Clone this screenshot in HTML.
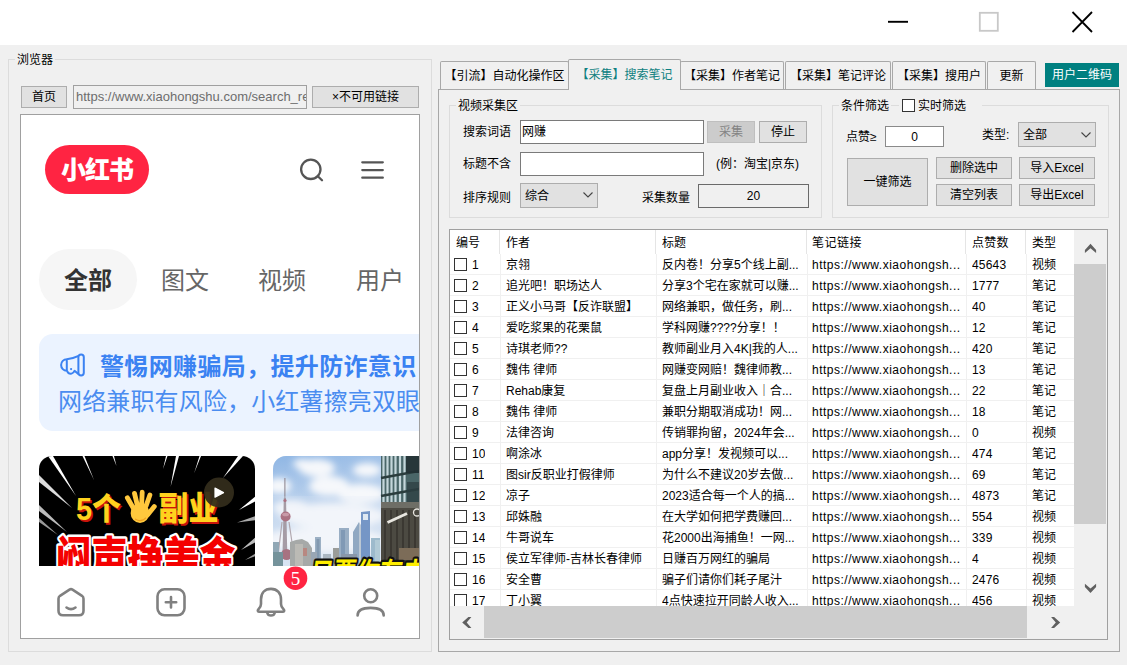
<!DOCTYPE html>
<html lang="zh-CN">
<head>
<meta charset="utf-8">
<title>小红书采集</title>
<style>
*{box-sizing:border-box;margin:0;padding:0}
html,body{width:1127px;height:665px;overflow:hidden;background:#f0f0f0}
body{position:relative;font-family:"Liberation Sans","Noto Sans CJK SC",sans-serif;font-size:12px;color:#000;line-height:1}
.abs{position:absolute}
.t{position:absolute;white-space:nowrap;line-height:16px;height:16px;font-size:12px}
#titlebar{left:0;top:0;width:1127px;height:45px;background:#fff}
.grp{position:absolute;border:1px solid #dcdcdc}
.glabel{position:absolute;background:#f0f0f0;white-space:nowrap;font-size:12px;line-height:14px;height:14px}
.btn{position:absolute;background:#e1e1e1;border:1px solid #adadad;text-align:center;font-size:12px;white-space:nowrap}
.btn.dis{background:#cccccc;border-color:#bfbfbf;color:#838383}
.inp{position:absolute;background:#fff;border:1px solid #7a7a7a;font-size:12px;white-space:nowrap;overflow:hidden}
.sel{position:absolute;background:#e1e1e1;border:1px solid #adadad;font-size:12px;white-space:nowrap}
.tab{position:absolute;top:61px;height:28px;border:1px solid #a8a8a8;border-bottom:none;border-radius:2px 2px 0 0;background:#f0f0f0;text-align:center;font-size:12px;line-height:29px;white-space:nowrap}
.tab.on{top:59px;height:31px;line-height:31px;color:#0e8080;z-index:3}
/* browser */
#web{left:20px;top:114px;width:400px;height:525px;background:#fff;border:1px solid #a0a0a0;overflow:hidden}
#web .w{position:absolute;white-space:nowrap}
/* list */
#list{left:449px;top:229px;width:659px;height:411px;background:#fff;border:1px solid #a0a0a0;overflow:hidden}
.row{position:absolute;left:0;width:624px;height:21px;border-bottom:1px solid #f0f0f0}
.row span{position:absolute;top:1px;line-height:20px;height:20px;white-space:nowrap;font-size:12px;overflow:hidden}
.cb{position:absolute;left:4px;top:4px;width:13px;height:13px;border:1px solid #333;background:#fff}
.c0{left:22px}.c1{left:56px;width:148px}.c2{left:212px;width:142px}.c3{left:362px;width:156px;letter-spacing:0.500px}.c4{left:522px;width:56px;letter-spacing:0.200px}.c5{left:582px;width:40px}
.vl{position:absolute;top:0;width:1px;height:376px;background:#f0f0f0}
</style>
</head>
<body>
<div id="titlebar" class="abs">
<svg class="abs" style="left:880px;top:0" width="247" height="45" viewBox="0 0 247 45">
<path d="M8 21.800H28" stroke="#000" stroke-width="1.900" fill="none"/>
<rect x="99.800" y="12.800" width="18" height="18" stroke="#c8c8c8" stroke-width="1.800" fill="none"/>
<path d="M192.5 12L212 32M212 12L192.5 32" stroke="#000" stroke-width="1.800" fill="none"/>
</svg>
</div>

<!-- left group -->
<div class="grp" style="left:8px;top:59px;width:424px;height:593px"></div>
<div class="glabel" style="left:15px;top:53px;padding:0 2px">浏览器</div>
<div class="btn" style="left:21px;top:86px;width:46px;height:22px;line-height:20.500px">首页</div>
<div class="inp" style="left:73px;top:85px;width:234px;height:24px;background:#f0f0f0;border-color:#a0a0a0;color:#6d6d6d;line-height:22px;padding-left:2px;font-size:13px">https://www.xiaohongshu.com/search_re</div>
<div class="btn" style="left:312px;top:86px;width:107px;height:22px;line-height:20px">×不可用链接</div>

<div id="web" class="abs">
<!--WEB-START-->
<!-- coordinates inside #web are page coords minus (21,115) -->
<div class="w" style="left:24px;top:30px;width:104px;height:49px;border-radius:25px;background:#ff2442"></div>
<div class="w" style="left:24px;top:32px;width:104px;height:49px;line-height:47px;text-align:center;color:#fff;font-weight:900;font-size:25px;letter-spacing:-1px;font-family:'Liberation Sans','Noto Sans CJK SC',sans-serif">小红书</div>
<svg class="w" style="left:270px;top:36px" width="100" height="40" viewBox="0 0 100 40">
<circle cx="19.800" cy="18.300" r="9.700" stroke="#555" stroke-width="2.300" fill="none"/>
<path d="M26.800 25.200L31 29.300" stroke="#555" stroke-width="2.300" stroke-linecap="round"/>
<path d="M71.300 11.300H91.800M71.300 19.100H91.800M71.300 26.700H91.800" stroke="#555" stroke-width="2.300" stroke-linecap="round"/>
</svg>
<div class="w" style="left:18px;top:134px;width:98px;height:61px;border-radius:31px;background:#f6f6f6"></div>
<div class="w" style="left:18px;top:136px;width:98px;height:60px;line-height:60px;text-align:center;font-size:24px;font-weight:700;color:#333">全部</div>
<div class="w" style="left:140px;top:136px;height:60px;line-height:60px;font-size:24px;color:#666">图文</div>
<div class="w" style="left:237px;top:136px;height:60px;line-height:60px;font-size:24px;color:#666">视频</div>
<div class="w" style="left:335px;top:136px;height:60px;line-height:60px;font-size:24px;color:#666">用户</div>

<div class="w" style="left:18px;top:219px;width:420px;height:97px;border-radius:14px;background:#ebf3ff"></div>
<svg class="w" style="left:29px;top:230px" width="60" height="40" viewBox="0 0 60 40">
<g stroke="#3b82f2" stroke-width="2" fill="none" stroke-linecap="round" stroke-linejoin="round">
<path d="M16.800 14.200A5.700 5.800 0 0 0 16.800 25.800M16.800 14.200V25.800M16.800 14.200Q23.500 13.600 28 11.200M17 25.800Q18.500 29.300 21.500 28.600Q23.500 28 24.500 25.800L28 28.600"/>
<rect x="28.400" y="9.400" width="5.400" height="21" rx="2.700"/>
</g>
<circle cx="21.100" cy="24.100" r="1.100" fill="#3b82f2"/>
</svg>
<div class="w" style="left:79px;top:235px;height:34px;line-height:34px;font-size:24px;font-weight:700;color:#3a82f2;letter-spacing:0.350px">警惕网赚骗局，提升防诈意识</div>
<div class="w" style="left:37px;top:270px;height:34px;line-height:34px;font-size:24px;color:#4a8cf0;letter-spacing:0.150px">网络兼职有风险，小红薯擦亮双眼</div>

<!-- card 1 -->
<div class="w" style="left:18px;top:341px;width:216px;height:140px;border-radius:13px;background:#000;overflow:hidden">
<svg class="w" style="left:0;top:0" width="217" height="140" viewBox="0 0 217 140">
<g fill="#fff">
<path d="M9 0L14 0L37 40Z"/><path d="M43.500 0L45.500 0L55 24Z"/><path d="M73.500 0L75 0L77.500 10Z"/><path d="M127 0L128.500 0L124 13Z"/><path d="M137 0L140 0L131.500 31Z"/><path d="M160.500 0L162 0L155 17.500Z"/><path d="M199 0L204 0L184 22Z"/>
<path d="M217 40L217 45L200 54Z"/><path d="M217 60L217 64L198 66.500Z" fill="#aaa"/><path d="M217 81L217 86L202 94Z" fill="#bbb"/><path d="M217 97L217 100L206 104Z" fill="#999"/>
<path d="M0 19L0 26L33 52Z" fill="#ddd"/><path d="M0 49L0 55L28 76Z" fill="#bbb"/><path d="M0 62L0 66L19 79Z" fill="#999"/>
</g>
<g font-family="'Liberation Sans','Noto Sans CJK SC',sans-serif" font-weight="900">
<g transform="translate(37,64) scale(1,1.080)">
<text x="1.500" y="2" font-size="29" fill="#c8140a">5个</text>
<text x="0" y="0" font-size="29" fill="#ffd21e">5个</text>
</g>
<g transform="translate(119.500,64) scale(1,1.100)">
<text x="1.500" y="2" font-size="30" fill="#c8140a">副业</text>
<text x="0" y="0" font-size="30" fill="#ffd21e">副业</text>
</g>
<g transform="translate(16.500,117) scale(1,1.200)">
<text x="0" y="0" font-size="36" fill="#fff" stroke="#fff" stroke-width="4" stroke-linejoin="round">闷声挣美金</text>
<text x="0" y="0" font-size="36" fill="#f40000">闷声挣美金</text>
</g>
</g>
<g transform="translate(84.500,33.500) scale(1.100)" stroke="#ffc83d" stroke-width="4.400" stroke-linecap="round" fill="none">
<path d="M9 17L3.500 7.500M12.500 14L10 3.500M16.500 13.500L17 2.500M20.500 15L24 5M22 23L28 15.500" />
<ellipse cx="15" cy="21.500" rx="7.500" ry="8" fill="#ffc83d" stroke-width="2"/>
<path d="M11 27c3 2 7 1.500 9-1" stroke="#f0a020" stroke-width="1.200"/>
</g>
<circle cx="180" cy="36.500" r="15" fill="#332d1c" fill-opacity="0.940"/>
<path d="M176 32L184.500 36.600L176 41.200Z" fill="#fff" stroke="#fff" stroke-width="1.200" stroke-linejoin="round"/>
</svg>
</div>

<!-- card 2 -->
<div class="w" style="left:252px;top:341px;width:217px;height:140px;border-radius:13px;background:#dfe8f2;overflow:hidden">
<svg class="w" style="left:0;top:0" width="217" height="140" viewBox="0 0 217 140">
<defs>
<linearGradient id="sky" x1="0" y1="0" x2="0.300" y2="1"><stop offset="0" stop-color="#8fb6e4"/><stop offset="0.400" stop-color="#c2d6ee"/><stop offset="1" stop-color="#e8eef5"/></linearGradient>
<filter id="bl" x="-20%" y="-20%" width="140%" height="140%"><feGaussianBlur stdDeviation="3.500"/></filter>
<filter id="b1" x="-20%" y="-20%" width="140%" height="140%"><feGaussianBlur stdDeviation="0.700"/></filter>
</defs>
<rect width="217" height="140" fill="url(#sky)"/>
<g fill="#f6f8fb" filter="url(#bl)">
<ellipse cx="44" cy="12" rx="18" ry="9"/><ellipse cx="56" cy="30" rx="20" ry="10"/><ellipse cx="6" cy="30" rx="12" ry="8"/><ellipse cx="94" cy="14" rx="14" ry="7"/><ellipse cx="88" cy="38" rx="24" ry="10"/><ellipse cx="60" cy="60" rx="52" ry="13"/><ellipse cx="18" cy="52" rx="18" ry="8"/><ellipse cx="50" cy="84" rx="62" ry="13"/><ellipse cx="30" cy="8" rx="10" ry="5"/>
</g>
<g filter="url(#b1)">
<rect x="11.400" y="22" width="1" height="21" fill="#8a8088"/>
<path d="M10.800 42h2.200l1.400 60h-5z" fill="#9a8c94"/>
<circle cx="12.600" cy="60.500" r="5" fill="#a0586a"/>
<ellipse cx="12.600" cy="58.500" rx="3.500" ry="1.800" fill="#c48a98"/>
<circle cx="13.600" cy="98.500" r="5.600" fill="#9c5868"/>
<circle cx="12" cy="44.500" r="1.600" fill="#a0586a"/>
<path d="M9 66L5 100M16 66L21 100" stroke="#a89aa0" stroke-width="1.200"/>
<rect x="0" y="86" width="6" height="54" fill="#7f99a8"/><rect x="0" y="96" width="10" height="44" fill="#5f8088"/>
<path d="M17 86l6-2 6-1 6 3 4 6v48h-22z" fill="#9a9c98"/><rect x="22" y="88" width="8" height="52" fill="#b4b0a8"/><rect x="30" y="92" width="4" height="8" fill="#c05848" fill-opacity="0.600"/>
<rect x="42" y="81" width="6" height="59" fill="#8ea4ba"/><rect x="43.500" y="83" width="3" height="57" fill="#6f88a2"/>
<rect x="38" y="96" width="6" height="44" fill="#8a98a6"/><rect x="50" y="98" width="8" height="42" fill="#a0acb8"/>
<rect x="60" y="92" width="7" height="48" fill="#8c8c86"/>
<rect x="66" y="72" width="10" height="68" fill="#8aa2ba"/><rect x="68" y="74" width="4" height="66" fill="#6c88a8"/>
<path d="M80 76l6-10v74h-6z" fill="#7f9ab8"/><path d="M86 66l5 8v66h-5z" fill="#b4c0cc"/><rect x="91" y="74" width="3" height="66" fill="#90a4b8"/>
<path d="M88 56l9-1v85h-9z" fill="#5f84bc"/><rect x="90" y="58" width="5" height="6" fill="#dfe8f2"/>
<rect x="98" y="82" width="9" height="58" fill="#8fb0c4"/><rect x="102" y="84" width="5" height="56" fill="#a8c4d0"/>
<rect x="68" y="98" width="16" height="42" fill="#77869a"/>
<rect x="0" y="112" width="108" height="28" fill="#5c6670"/>
<rect x="0" y="40" width="108" height="100" fill="#dfe8f2" fill-opacity="0.180"/>
</g>
<!-- near tower -->
<rect x="108" y="0" width="109" height="47" fill="#4a6668"/>
<g filter="url(#b1)">
<path d="M110.500 0V46M114.500 0V46M118.500 0V46M122.500 0V46M127 0V46M131.500 0V46" stroke="#c4d6da" stroke-width="2.200"/>
<path d="M108 22L146 15M108 40L146 33" stroke="#2c3c3e" stroke-width="2.600"/>
<rect x="133" y="0" width="13" height="17" fill="#223034" fill-opacity="0.900"/>
<rect x="134" y="26" width="12" height="20" fill="#2c3e40" fill-opacity="0.750"/>
</g>
<rect x="108" y="46" width="38" height="94" fill="#4c4a42"/>
<g filter="url(#b1)">
<rect x="108" y="46" width="38" height="6" fill="#6e6e66"/>
<path d="M112 54V112M118 54V112M124 54V112M130 54V112M136 54V112M142 54V112" stroke="#3a3832" stroke-width="2"/>
<path d="M114.500 66.500L134 57.500" stroke="#e8e6e0" stroke-width="2.800"/>
<circle cx="144" cy="56.500" r="3.500" fill="#4c4a42" stroke="#e8e6e0" stroke-width="1.300"/>
<rect x="126" y="92" width="20" height="22" fill="#7c6c58"/>
<rect x="108" y="104" width="38" height="36" fill="#3a3a36"/>
</g>
<g transform="translate(36,126.500) scale(1,1.250) skewX(-10)">
<text x="0" y="0" font-family="'Liberation Sans','Noto Sans CJK SC',sans-serif" font-weight="700" font-size="23" fill="#ffee00" stroke="#111" stroke-width="3.500" paint-order="stroke" stroke-linejoin="round">只要你有电</text>
</g>
</svg>
</div>

<!-- bottom nav -->
<div class="w" style="left:0;top:451px;width:400px;height:72px;background:#fff"></div>
<svg class="w" style="left:0;top:451px" width="400" height="72" viewBox="0 0 400 72">
<g stroke="#808080" stroke-width="2.600" fill="none" stroke-linecap="round" stroke-linejoin="round">
<g transform="translate(0,-0.700)">
<path d="M48.500 24.300l-9.500 6.200c-1 0.700-1.500 1.500-1.500 3v12c0 3 1.500 4.500 4.500 4.500h16c3 0 4.500-1.500 4.500-4.500v-12c0-1.500-0.500-2.300-1.500-3l-9.500-6.200c-1-0.600-2-0.600-3 0z"/>
<path d="M45.500 42.200c2.800 2 6.200 2 9 0"/>
<rect x="136.500" y="24" width="27" height="26" rx="7"/>
<path d="M150 31.800v10.400M144.800 37h10.400"/>
</g>
<path d="M250 22.900C243.500 22.900 240 27.500 240 33.500V38C240 40.500 239 42 237.300 43.500C236.300 44.500 236.800 45.800 238.300 45.800H261.700C263.200 45.800 263.700 44.500 262.700 43.500C261 42 260 40.500 260 38V33.500C260 27.500 256.500 22.900 250 22.900Z"/>
<path d="M246.300 47A3.800 3.300 0 0 0 253.700 47"/>
<circle cx="349.700" cy="29.700" r="6.500"/>
<path d="M336.600 49.500C336.600 44.500 341 41.900 349.650 41.900S362.700 44.500 362.700 49.500"/>
</g>
<circle cx="274.500" cy="12.200" r="11.800" fill="#ff2442"/>
<text x="274.500" y="18.800" text-anchor="middle" font-family="'Liberation Serif',serif" font-size="19" fill="#fff">5</text>
</svg>
<!--WEB-END-->
</div>

<!-- right tab control -->
<!--RIGHT-START-->
<div class="abs" style="left:438px;top:89px;width:682px;height:563px;border:1px solid #a8a8a8;background:#f0f0f0"></div>
<div class="tab" style="left:440px;width:129px">【引流】自动化操作区</div>
<div class="tab on" style="left:568px;width:113px">【采集】搜索笔记</div>
<div class="tab" style="left:680px;width:104px">【采集】作者笔记</div>
<div class="tab" style="left:785px;width:106px">【采集】笔记评论</div>
<div class="tab" style="left:892px;width:94px">【采集】搜用户</div>
<div class="tab" style="left:987px;width:49px">更新</div>
<div class="abs" style="left:1045px;top:63px;width:74px;height:24px;background:#008080;color:#fff;font-size:12px;line-height:24px;text-align:center;white-space:nowrap">用户二维码</div>
<div class="grp" style="left:449px;top:105px;width:373px;height:113px"></div>
<div class="glabel" style="left:456px;top:99px;padding:0 2px">视频采集区</div>
<div class="t" style="left:463px;top:124px">搜索词语</div>
<div class="inp" style="left:520px;top:120px;width:184px;height:24px;line-height:22px;padding-left:1px">网赚</div>
<div class="btn dis" style="left:707px;top:121px;width:48px;height:22px;line-height:21.500px">采集</div>
<div class="btn" style="left:759px;top:121px;width:48px;height:22px;line-height:21.500px">停止</div>
<div class="t" style="left:463px;top:156px">标题不含</div>
<div class="inp" style="left:520px;top:152px;width:184px;height:24px"></div>
<div class="t" style="left:716px;top:156px">(例：淘宝|京东)</div>
<div class="t" style="left:463px;top:190px">排序规则</div>
<div class="sel" style="left:520px;top:183px;width:78px;height:25px;line-height:25px;padding-left:4px">综合</div>
<svg class="abs" style="left:582px;top:191px" width="12" height="8" viewBox="0 0 12 8"><path d="M1.500 1.500L6 6L10.500 1.500" stroke="#444" stroke-width="1.100" fill="none"/></svg>
<div class="t" style="left:642px;top:190px">采集数量</div>
<div class="inp" style="left:698px;top:184px;width:111px;height:24px;line-height:23px;text-align:center;background:#f0f0f0;border-color:#6a6a6a">20</div>
<div class="grp" style="left:832px;top:105px;width:277px;height:113px"></div>
<div class="glabel" style="left:839px;top:99px;padding:0 2px">条件筛选</div>
<div class="glabel" style="left:899px;top:99px;width:83px"></div>
<div class="abs" style="left:902px;top:99px;width:13px;height:13px;border:1px solid #333;background:#fff"></div>
<div class="t" style="left:918px;top:98px">实时筛选</div>
<div class="t" style="left:846px;top:129px">点赞≥</div>
<div class="inp" style="left:885px;top:126px;width:59px;height:21px;line-height:20px;text-align:center;border-color:#8a8a8a">0</div>
<div class="t" style="left:982px;top:127px">类型:</div>
<div class="sel" style="left:1018px;top:122px;width:78px;height:25px;line-height:25px;padding-left:4px">全部</div>
<svg class="abs" style="left:1080px;top:131px" width="12" height="8" viewBox="0 0 12 8"><path d="M1.500 1.500L6 6L10.500 1.500" stroke="#444" stroke-width="1.100" fill="none"/></svg>
<div class="btn" style="left:847px;top:158px;width:81px;height:48px;line-height:47.500px">一键筛选</div>
<div class="btn" style="left:936px;top:157px;width:76px;height:22px;line-height:21.500px">删除选中</div>
<div class="btn" style="left:1019px;top:157px;width:76px;height:22px;line-height:21.500px">导入Excel</div>
<div class="btn" style="left:936px;top:184px;width:76px;height:22px;line-height:21.500px">清空列表</div>
<div class="btn" style="left:1019px;top:184px;width:76px;height:22px;line-height:21.500px">导出Excel</div>
<div id="list" class="abs">
<div class="row" style="top:0;height:24px;border-bottom:none"><span style="left:6px;line-height:25px;height:25px">编号</span><span class="c1" style="line-height:25px;height:25px">作者</span><span class="c2" style="line-height:25px;height:25px">标题</span><span class="c3" style="line-height:25px;height:25px">笔记链接</span><span class="c4" style="line-height:25px;height:25px">点赞数</span><span class="c5" style="line-height:25px;height:25px">类型</span></div>
<div class="vl" style="left:49px;height:24px;background:#e5e5e5"></div>
<div class="vl" style="left:50px;top:24px;height:352px"></div>
<div class="vl" style="left:205px;height:24px;background:#e5e5e5"></div>
<div class="vl" style="left:206px;top:24px;height:352px"></div>
<div class="vl" style="left:356px;height:24px;background:#e5e5e5"></div>
<div class="vl" style="left:357px;top:24px;height:352px"></div>
<div class="vl" style="left:515px;height:24px;background:#e5e5e5"></div>
<div class="vl" style="left:516px;top:24px;height:352px"></div>
<div class="vl" style="left:575px;height:24px;background:#e5e5e5"></div>
<div class="vl" style="left:576px;top:24px;height:352px"></div>
<div class="row" style="top:24px"><i class="cb"></i><span class="c0">1</span><span class="c1">京翎</span><span class="c2">反内卷！分享5个线上副...</span><span class="c3">https://www.xiaohongsh...</span><span class="c4">45643</span><span class="c5">视频</span></div>
<div class="row" style="top:45px"><i class="cb"></i><span class="c0">2</span><span class="c1">追光吧！职场达人</span><span class="c2">分享3个宅在家就可以赚...</span><span class="c3">https://www.xiaohongsh...</span><span class="c4">1777</span><span class="c5">笔记</span></div>
<div class="row" style="top:66px"><i class="cb"></i><span class="c0">3</span><span class="c1">正义小马哥【反诈联盟】</span><span class="c2">网络兼职，做任务，刷...</span><span class="c3">https://www.xiaohongsh...</span><span class="c4">40</span><span class="c5">笔记</span></div>
<div class="row" style="top:87px"><i class="cb"></i><span class="c0">4</span><span class="c1">爱吃浆果的花栗鼠</span><span class="c2">学科网赚????分享！！</span><span class="c3">https://www.xiaohongsh...</span><span class="c4">12</span><span class="c5">笔记</span></div>
<div class="row" style="top:108px"><i class="cb"></i><span class="c0">5</span><span class="c1">诗琪老师??</span><span class="c2">教师副业月入4K|我的人...</span><span class="c3">https://www.xiaohongsh...</span><span class="c4">420</span><span class="c5">笔记</span></div>
<div class="row" style="top:129px"><i class="cb"></i><span class="c0">6</span><span class="c1">魏伟 律师</span><span class="c2">网赚变网赔！魏律师教...</span><span class="c3">https://www.xiaohongsh...</span><span class="c4">13</span><span class="c5">笔记</span></div>
<div class="row" style="top:150px"><i class="cb"></i><span class="c0">7</span><span class="c1">Rehab康复</span><span class="c2">复盘上月副业收入｜合...</span><span class="c3">https://www.xiaohongsh...</span><span class="c4">22</span><span class="c5">笔记</span></div>
<div class="row" style="top:171px"><i class="cb"></i><span class="c0">8</span><span class="c1">魏伟 律师</span><span class="c2">兼职分期取消成功！网...</span><span class="c3">https://www.xiaohongsh...</span><span class="c4">18</span><span class="c5">笔记</span></div>
<div class="row" style="top:192px"><i class="cb"></i><span class="c0">9</span><span class="c1">法律咨询</span><span class="c2">传销罪拘留，2024年会...</span><span class="c3">https://www.xiaohongsh...</span><span class="c4">0</span><span class="c5">视频</span></div>
<div class="row" style="top:213px"><i class="cb"></i><span class="c0">10</span><span class="c1">啊涂冰</span><span class="c2">app分享！发视频可以...</span><span class="c3">https://www.xiaohongsh...</span><span class="c4">474</span><span class="c5">笔记</span></div>
<div class="row" style="top:234px"><i class="cb"></i><span class="c0">11</span><span class="c1">图sir反职业打假律师</span><span class="c2">为什么不建议20岁去做...</span><span class="c3">https://www.xiaohongsh...</span><span class="c4">69</span><span class="c5">笔记</span></div>
<div class="row" style="top:255px"><i class="cb"></i><span class="c0">12</span><span class="c1">凉子</span><span class="c2">2023适合每一个人的搞...</span><span class="c3">https://www.xiaohongsh...</span><span class="c4">4873</span><span class="c5">笔记</span></div>
<div class="row" style="top:276px"><i class="cb"></i><span class="c0">13</span><span class="c1">邱姝融</span><span class="c2">在大学如何把学费赚回...</span><span class="c3">https://www.xiaohongsh...</span><span class="c4">554</span><span class="c5">视频</span></div>
<div class="row" style="top:297px"><i class="cb"></i><span class="c0">14</span><span class="c1">牛哥说车</span><span class="c2">花2000出海捕鱼！一网...</span><span class="c3">https://www.xiaohongsh...</span><span class="c4">339</span><span class="c5">视频</span></div>
<div class="row" style="top:318px"><i class="cb"></i><span class="c0">15</span><span class="c1">侯立军律师-吉林长春律师</span><span class="c2">日赚百万网红的骗局</span><span class="c3">https://www.xiaohongsh...</span><span class="c4">4</span><span class="c5">视频</span></div>
<div class="row" style="top:339px"><i class="cb"></i><span class="c0">16</span><span class="c1">安全曹</span><span class="c2">骗子们请你们耗子尾汁</span><span class="c3">https://www.xiaohongsh...</span><span class="c4">2476</span><span class="c5">视频</span></div>
<div class="row" style="top:360px"><i class="cb"></i><span class="c0">17</span><span class="c1">丁小翼</span><span class="c2">4点快速拉开同龄人收入...</span><span class="c3">https://www.xiaohongsh...</span><span class="c4">456</span><span class="c5">视频</span></div>
<div class="abs" style="left:624px;top:0;width:33px;height:376px;background:#f0f0f0"></div>
<div class="abs" style="left:624px;top:34px;width:32px;height:260px;background:#cdcdcd"></div>
<svg class="abs" style="left:624px;top:0" width="33" height="376" viewBox="0 0 33 376"><path d="M16.500 13.800L22.100 20L22.100 23.100L16.500 18.200L10.900 23.100L10.900 20Z" fill="#606060"/><path d="M16.500 362.900L22.100 356.900L22.100 353.800L16.500 358.600L10.900 353.800L10.900 356.900Z" fill="#606060"/></svg>
<div class="abs" style="left:0;top:376px;width:657px;height:33px;background:#f0f0f0"></div>
<div class="abs" style="left:34px;top:376px;width:543px;height:32px;background:#cdcdcd"></div>
<svg class="abs" style="left:0;top:376px" width="657" height="32" viewBox="0 0 657 32"><path d="M12.200 16.500L18.400 10.900L21.400 10.900L16.700 16.500L21.400 22.100L18.400 22.100Z" fill="#606060"/><path d="M610.200 16.500L604.100 22.100L601.100 22.100L605.800 16.500L601.100 10.900L604.100 10.900Z" fill="#606060"/></svg>
</div>
<!--RIGHT-END-->
</body>
</html>
